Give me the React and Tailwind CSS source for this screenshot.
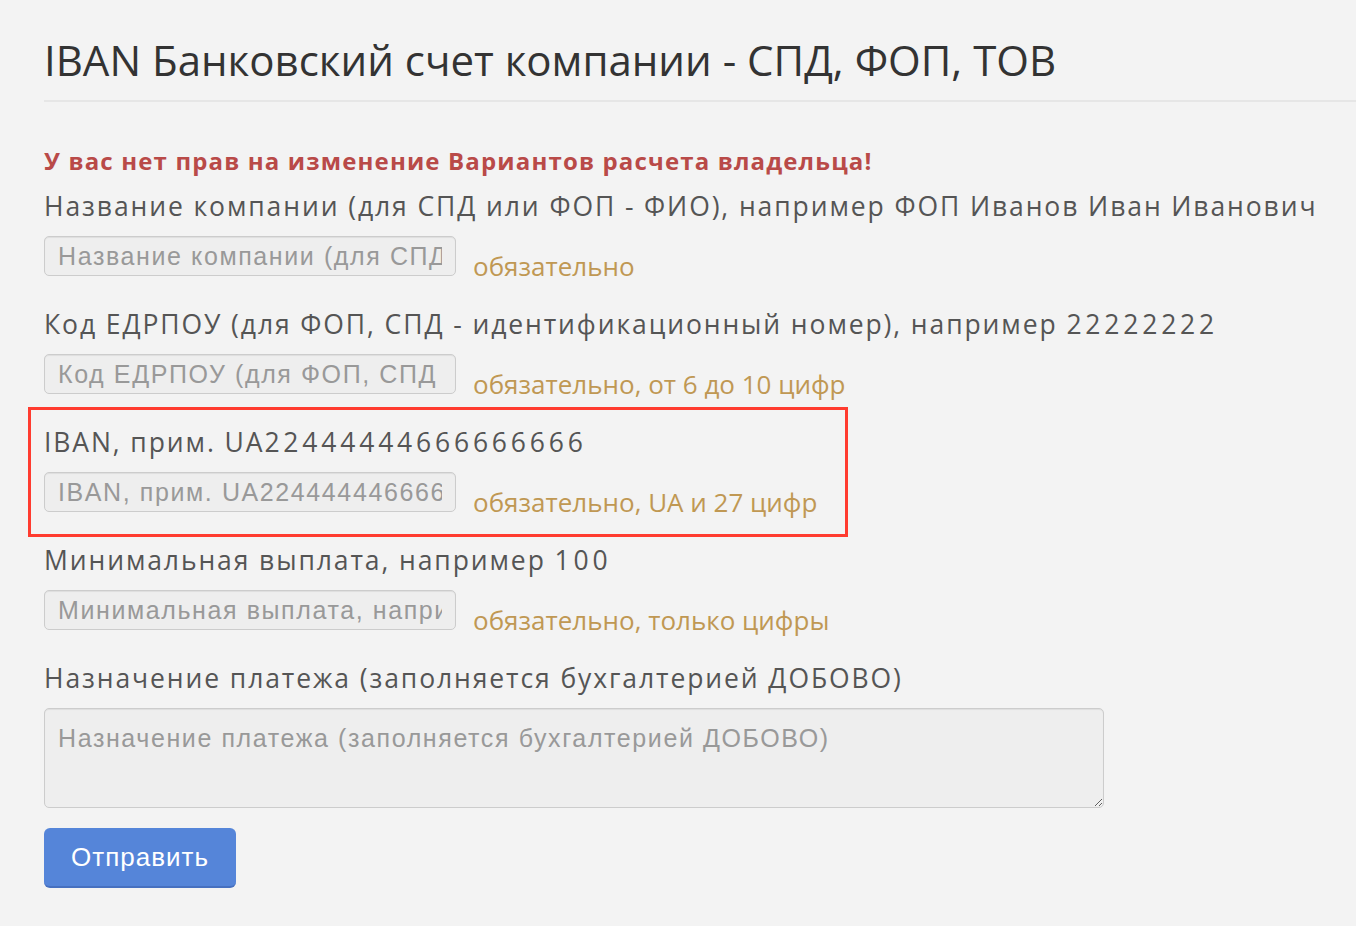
const fields = [
  {
    label: 'Название компании (для СПД или ФОП - ФИО), например ФОП Иванов Иван Иванович',
    placeholder: 'Название компании (для СПД или ФОП - ФИО), например ФОП Иванов Иван Иванович',
    hint: 'обязательно',
  },
  {
    label: 'Код ЕДРПОУ (для ФОП, СПД - идентификационный номер), например 22222222',
    placeholder: 'Код ЕДРПОУ (для ФОП, СПД - идентификационный номер), например 22222222',
    hint: 'обязательно, от 6 до 10 цифр',
  },
  {
    label: 'IBAN, прим. UA22444444666666666',
    placeholder: 'IBAN, прим. UA22444444666666666',
    hint: 'обязательно, UA и 27 цифр',
    marked: true,
  },
  {
    label: 'Минимальная выплата, например 100',
    placeholder: 'Минимальная выплата, например 100',
    hint: 'обязательно, только цифры',
  },
];

const openSans = "font-['Open_Sans',sans-serif]";
const helv = "font-['Liberation_Sans',Arial,sans-serif]";
const labelCls = `${openSans} h-[36px] leading-[36px] text-[26.5px] tracking-[1.9px] text-[#555] whitespace-nowrap`;
const controlCls = `${helv} rounded-[5px] border border-[#cccccc] bg-[#eeeeee] text-[25px] tracking-[1.6px] text-[#555] placeholder:text-[#999] outline-none shadow-[inset_0_1px_1px_rgba(0,0,0,0.07)]`;

// digits in the labels run a little wider than the letters
function LabelText({ text }) {
  return text.split(/(\d+)/).map((part, i) =>
    /^\d+$/.test(part) ? <span key={i} className="tracking-[3.8px]">{part}</span> : part
  );
}

function Field({ label, placeholder, hint, marked }) {
  return (
    <div className="relative mb-[30px]">
      {marked && (
        <div className="absolute left-[-16px] top-[-17px] w-[820px] h-[130px] border-[3px] border-[#ff3b2f] pointer-events-none" />
      )}
      <div className={labelCls}><LabelText text={label} /></div>
      <div className="flex items-start h-[40px] mt-[12px]">
        <input readOnly placeholder={placeholder} className={`${controlCls} w-[412px] h-[40px] px-[13px]`} />
        <span className={`${openSans} ml-[17px] mt-[13px] leading-[34px] text-[26px] text-[#c09853] whitespace-nowrap`}>{hint}</span>
      </div>
    </div>
  );
}

export default function App() {
  return (
    <div className="min-h-[926px] bg-[#f3f3f3] pl-[44px] pt-[34px]">
      <h1 className={`${openSans} leading-[52px] text-[42px] text-[#333] pb-[14px] border-b-2 border-[#e6e6e6]`}>
        IBAN Банковский счет компании - СПД, ФОП, ТОВ
      </h1>

      <div className={`${openSans} mt-[41px] h-[36px] leading-[36px] text-[24px] tracking-[1.15px] font-bold text-[#b94a48]`}>
        У вас нет прав на изменение Вариантов расчета владельца!
      </div>

      <div className="mt-[9px]">
        {fields.map((f) => (
          <Field key={f.hint} {...f} />
        ))}

        <div className={labelCls}>Назначение платежа (заполняется бухгалтерией ДОБОВО)</div>
        <textarea
          readOnly
          placeholder="Назначение платежа (заполняется бухгалтерией ДОБОВО)"
          className={`${controlCls} block mt-[12px] w-[1060px] h-[100px] px-[13px] pt-[13px] leading-[32px]`}
        />

        <button
          className={`${helv} mt-[20px] w-[192px] h-[60px] rounded-[6px] bg-[#5585d9] border-b-2 border-[#4670c0] text-white text-[26px] tracking-[1px]`}
        >
          Отправить
        </button>
      </div>
    </div>
  );
}
